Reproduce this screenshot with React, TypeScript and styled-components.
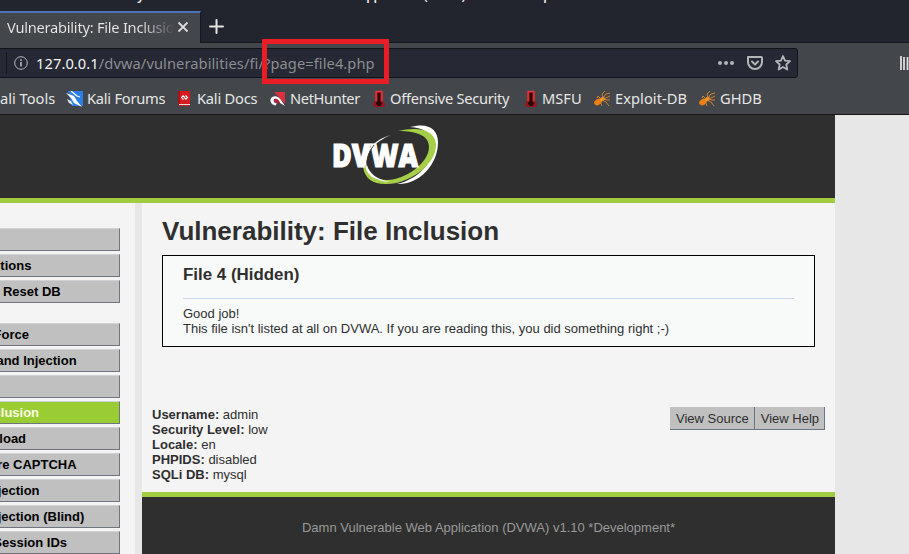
import React from "react";
import styled, { createGlobalStyle } from "styled-components";

const Global = createGlobalStyle`
  *{box-sizing:border-box}
  body{margin:0;background:#e7e7e7;overflow:hidden}
  h1,h2,p{margin:0}
`;

const Frame = styled.div`
  width:909px;height:554px;overflow:hidden;position:relative;display:flex;flex-direction:column;
  font-family:"Liberation Sans",Arial,sans-serif;font-size:13px;line-height:15px;color:#2f2f2f;
`;
const Chrome = styled.header`
  height:115px;flex:none;background:#43464b;border-bottom:1px solid #16171b;
  font-family:"Noto Sans",sans-serif;font-size:14.67px;color:#e6e6e5;white-space:nowrap;
`;
const TitleBar = styled.div`
  height:11px;background:#23252e;overflow:hidden;display:flex;align-items:flex-end;
`;
const WindowTitle = styled.span`
  font-size:12.5px;font-weight:600;line-height:18px;letter-spacing:-.6px;margin:0 0 6px 74px;
`;
const TabStrip = styled.div`
  height:32px;background:#23252e;display:flex;border-bottom:1px solid #17181d;
`;
const Tab = styled.div`
  width:201px;height:32px;background:#43464b;border-top:2px solid #4a72b8;border-right:1px solid #17181d;
  display:flex;align-items:center;gap:4px;padding:0 0 2px 7px;
`;
const TabLabel = styled.span`
  width:166px;overflow:hidden;line-height:22px;letter-spacing:-.25px;
  background:linear-gradient(90deg,#e6e6e5 134px,rgba(238,238,236,0) 168px);
  background-clip:text;color:transparent;
`;
const NewTab = styled.div`
  padding:8px 0 0 8px;line-height:0;
`;
const NavBar = styled.div`
  height:40px;display:flex;padding-top:5px;
`;
const UrlBar = styled.div`
  width:804px;height:30px;margin-left:-6px;flex:none;background:#262933;border:1px solid #121318;border-radius:3px;
  display:flex;align-items:center;padding:0 6px 0 11px;color:#8b8d91;
`;
const Host = styled.b`font-weight:400;color:#f4f4f4;`;
const Address = styled.span`margin-left:8px;flex:1;line-height:22px;letter-spacing:.08px;`;
const Actions = styled.span`display:flex;gap:11px;align-items:center;`;
const Identity = styled.span`
  border-left:1px solid #16171b;height:22px;padding-left:7px;display:flex;align-items:center;
`;
const Library = styled.div`margin:8px 0 0 101px;line-height:0;flex:none;`;
const Bookmarks = styled.nav`
  height:31px;display:flex;align-items:center;
`;
const Bookmark = styled.span<{ $w: number; $tracking?: number }>`
  width:${p => p.$w}px;flex:none;display:flex;align-items:center;gap:4px;
  letter-spacing:${p => p.$tracking ?? 0}px;
  svg{flex:none}
`;
const Highlight = styled.div`
  position:absolute;left:262px;top:39px;width:127px;height:45px;border:5px solid #e91d25;
`;

const Page = styled.div`
  width:835px;height:439px;display:flex;flex-direction:column;background:#e7e7e7;
`;
const Banner = styled.div`
  height:88px;flex:none;background:#2f2f2f;border-bottom:5px solid #a1cc3f;padding:8px 0 0 330px;
`;
const Body = styled.div`display:flex;gap:7px;flex:1;min-height:0;`;
const Sidebar = styled.aside`
  width:135px;background:#f4f4f4;padding-top:25px;overflow:hidden;display:flex;flex-direction:column;gap:3px;
`;
const MenuItem = styled.div<{ $active?: boolean; $first?: boolean; $x: number }>`
  width:120px;height:23px;flex:none;margin-top:${p => (p.$first ? 17 : 0)}px;
  background:${p => (p.$active ? "#9acc33" : "#c0c0c0")};color:${p => (p.$active ? "#fbfde8" : "#000")};
  border:solid #6f747e;border-width:0 1px 1px 0;border-top:1px solid #cfd1d4;
  font-weight:700;line-height:21px;white-space:nowrap;overflow:hidden;
  text-indent:${p => p.$x}px;
`;
const Main = styled.main`
  width:693px;display:flex;flex-direction:column;
`;
const Content = styled.section`
  height:289px;flex:none;background:#f4f4f4;padding:12px 20px 0;
`;
const Heading = styled.h1`font-size:26px;line-height:32px;`;
const Card = styled.div`
  margin-top:8px;height:92px;border:1px solid #000;background:#f8fafa;padding:9px 20px 0;
`;
const CardTitle = styled.h2`font-size:16.9px;line-height:20px;`;
const Rule = styled.div`height:1px;background:#c9d3ea;margin:13px 0 7px;`;
const Status = styled.div`
  display:flex;justify-content:space-between;margin:60px -10px 0;
`;
const Button = styled.span`
  display:inline-block;height:23px;line-height:23px;background:#c0c0c0;border:solid #6a7484;border-width:0 1px 1px 0;
  padding:0 5px 0 6px;
`;
const Buttons = styled.div`display:flex;`;
const Footer = styled.footer`
  flex:1;background:#2f2f2f;border-top:5px solid #a1cc3f;color:#999;text-align:center;padding-top:23px;
`;

const Kali = () => (
  <svg width="17" height="16" viewBox="0 0 17 16"><path d="M2 0h15v15H6z" fill="#2b7fe6" /><path d="M0 2l8 3 3 5 5 6-8-4-3-5z" fill="#fff" /><path d="M1 8l4 2 2 4-4-2z" fill="#dcebfa" /><path d="M5 0l6 5M11 5l3 1" stroke="#fff" fill="none" strokeWidth="1.200" /></svg>
);
const Docs = () => (
  <svg width="16" height="16" viewBox="1 0 16 16"><path d="M3 0h11v13H3z" fill="#d61b1f" /><path d="M2 0h2v14H2z" fill="#a31519" /><path d="M3 13h11v1.200H3z" fill="#f1d8d8" /><path d="M2 14.200h12v1H2z" fill="#b9191d" /><path d="M7.500 4.500L5.500 6.500l2 2M9.500 4.500l2 2-2 2M7.700 5l1.700 3" stroke="#fff" strokeWidth="1.100" fill="none" /></svg>
);
const Hunter = () => (
  <svg width="16" height="16" viewBox="0 0 16 16"><path d="M4 1h11v12z" fill="#dc2f3d" /><path d="M15 15L11 9C8 4 2 4 .500 8.500c-.5 3 2 5.500 5 6l1.500-2C4 12 3 10 4 8.500c2-2 5 0 6 3.500z" fill="#fff" /><path d="M7 12.500L3.700 9.800C5 6 8 8 10 12z" fill="#b8243a" /></svg>
);
const Thermo = () => (
  <svg width="14" height="18" viewBox="0 0 14 18"><path d="M3 1h8v10l2 3-1 3H2l-1-3 2-3z" fill="#94151a" /><path d="M5.800 3h2.400v8l2 2.500-2 2.500H5.800l-2-2.500 2-2.500z" fill="#260808" /><path d="M4 1v10M10 1v10M4 1.500h6" stroke="#e23b3b" strokeWidth="1.500" /></svg>
);
const Bug = () => (
  <svg width="17" height="16" viewBox="0 0 17 16"><ellipse cx="4" cy="11" rx="4" ry="3" transform="rotate(-30 4 11)" fill="#ea7d14" /><ellipse cx="8.500" cy="8" rx="2.500" ry="2" transform="rotate(-30 8.500 8)" fill="#f0962a" /><path d="M7 8L4 5 3 7M9 7L8 3l3-3M9 7l3-4 4-1M10 8l6-3M9 8l4 1 3 0M8 9l4 2 3 4M6 10l2 5" stroke="#e0892a" strokeWidth=".9" fill="none" /></svg>
);

const bookmarks = [
  { label: "Kali Forums", w: 111, tracking: -0.25, Icon: Kali },
  { label: "Kali Docs", w: 93, tracking: -0.22, Icon: Docs },
  { label: "NetHunter", w: 102, tracking: -0.37, Icon: Hunter },
  { label: "Offensive Security", w: 152, tracking: -0.27, Icon: Thermo },
  { label: "MSFU", w: 70, tracking: 0, Icon: Thermo },
  { label: "Exploit-DB", w: 105, tracking: 0.05, Icon: Bug },
  { label: "GHDB", w: 80, tracking: 0, Icon: Bug },
];
const menu = [
  { label: "", x: 0 },
  { label: "Instructions", x: -43 },
  { label: "Setup / Reset DB", x: -44 },
  { label: "Brute Force", x: -44, first: true },
  { label: "Command Injection", x: -44 },
  { label: "", x: 0 },
  { label: "File Inclusion", x: -44, active: true },
  { label: "File Upload", x: -44 },
  { label: "Insecure CAPTCHA", x: -44 },
  { label: "SQL Injection", x: -44 },
  { label: "SQL Injection (Blind)", x: -44 },
  { label: "Weak Session IDs", x: -44 },
];
const status = [
  ["Username", "admin"], ["Security Level", "low"], ["Locale", "en"], ["PHPIDS", "disabled"], ["SQLi DB", "mysql"],
];

export default function App() {
  return (
    <Frame>
      <Global />
      <Chrome>
        <TitleBar><WindowTitle>Vulnerability: File Inclusion :: Damn Vulnerable Web Application (DVWA) v1.10 *Development*</WindowTitle></TitleBar>
        <TabStrip>
          <Tab>
            <TabLabel>Vulnerability: File Inclusion</TabLabel>
            <svg width="12" height="12" viewBox="0 0 12 12"><path d="M1.500 1.500l9 9M10.500 1.500l-9 9" stroke="#dcdcdc" strokeWidth="1.800" /></svg>
          </Tab>
          <NewTab><svg width="15" height="15" viewBox="0 0 15 15"><path d="M7.500 1v13M1 7.500h13" stroke="#e4e4e4" strokeWidth="2" strokeLinecap="round" /></svg></NewTab>
        </TabStrip>
        <NavBar>
          <UrlBar>
            <Identity>
              <svg width="14" height="14" viewBox="0 0 14 14" fill="none" stroke="#b9babd"><circle cx="7" cy="7" r="6.300" /><path d="M7 6v4.500M7 3.300v1.600" strokeWidth="1.600" /></svg>
            </Identity>
            <Address><Host>127.0.0.1</Host>/dvwa/vulnerabilities/fi/?page=file4.php</Address>
            <Actions>
              <svg width="18" height="16" viewBox="0 0 18 16" fill="#b4b5b9"><circle cx="2" cy="8" r="2" /><circle cx="8" cy="8" r="2" /><circle cx="14" cy="8" r="2" /></svg>
              <svg width="17" height="16" viewBox="1 0 17 16" fill="none" stroke="#b4b5b9" strokeWidth="2" strokeLinecap="round" strokeLinejoin="round"><path d="M2 2h13q1 0 1 1v4a7 7 0 0 1-14 0V2z" /><path d="M6 6.500l3 3 3-3" /></svg>
              <svg width="16" height="16" viewBox="0 0 16 16" fill="none" stroke="#b4b5b9" strokeWidth="1.800" strokeLinejoin="round"><path d="M8 1l2 4.600 5 .5-3.700 3.400 1 5L8 12l-4.300 2.500 1-5L1 6.100l5-.5z" /></svg>
            </Actions>
          </UrlBar>
          <Library><svg width="16" height="14" viewBox="0 0 16 14"><path d="M2 0v14M5 1v13M8.500 1v13" stroke="#ddd" strokeWidth="1.800" /></svg></Library>
        </NavBar>
        <Bookmarks>
          <Bookmark $w={66}>ali Tools</Bookmark>
          {bookmarks.map(({ label, w, tracking, Icon }) => <Bookmark key={label} $w={w} $tracking={tracking}><Icon />{label}</Bookmark>)}
        </Bookmarks>
      </Chrome>
      <Page>
        <Banner>
          <svg width="112" height="68" viewBox="0 0 112 68">
            <path d="M80 4C98-1 108 6 108 19c0 24-20 43-41 42 22-5 37-22 36-41C101 10 94 5 80 4z" fill="#fff" />
            <path d="M68 8c20-5 38-1 38 14 0 21-29 40-51 39-12 0-20-5-22-17l4 0c3 9 9 13 20 13 18 0 42-17 42-33C99 13 88 8 68 8z" fill="#a5cf48" />
            <path d="M61 12C44 19 34 31 37 42c2 8 9 14 23 17-15-1-24-7-25-17-2-12 8-25 26-30z" fill="#fff" />
            <text x="2" y="43.500" fill="#fff" stroke="#fff" strokeWidth="1.200" fontFamily="Open Sans" fontWeight="800" fontSize="32.500" textLength="86" lengthAdjust="spacingAndGlyphs">DVWA</text>
            <path d="M44 22q-8 10-7 21" fill="none" stroke="#2f2f2f" strokeWidth=".9" />
          </svg>
        </Banner>
        <Body>
          <Sidebar>
            {menu.map((m, i) => <MenuItem key={i} $x={m.x} $first={m.first} $active={m.active}>{m.label}</MenuItem>)}
          </Sidebar>
          <Main>
            <Content>
              <Heading>Vulnerability: File Inclusion</Heading>
              <Card>
                <CardTitle>File 4 (Hidden)</CardTitle>
                <Rule />
                <p>Good job!<br />This file isn't listed at all on DVWA. If you are reading this, you did something right ;-)</p>
              </Card>
              <Status>
                <div>{status.map(([k, v]) => <div key={k}><b>{k}:</b> {v}</div>)}</div>
                <Buttons><Button>View Source</Button><Button>View Help</Button></Buttons>
              </Status>
            </Content>
            <Footer>Damn Vulnerable Web Application (DVWA) v1.10 *Development*</Footer>
          </Main>
        </Body>
      </Page>
      <Highlight />
    </Frame>
  );
}
